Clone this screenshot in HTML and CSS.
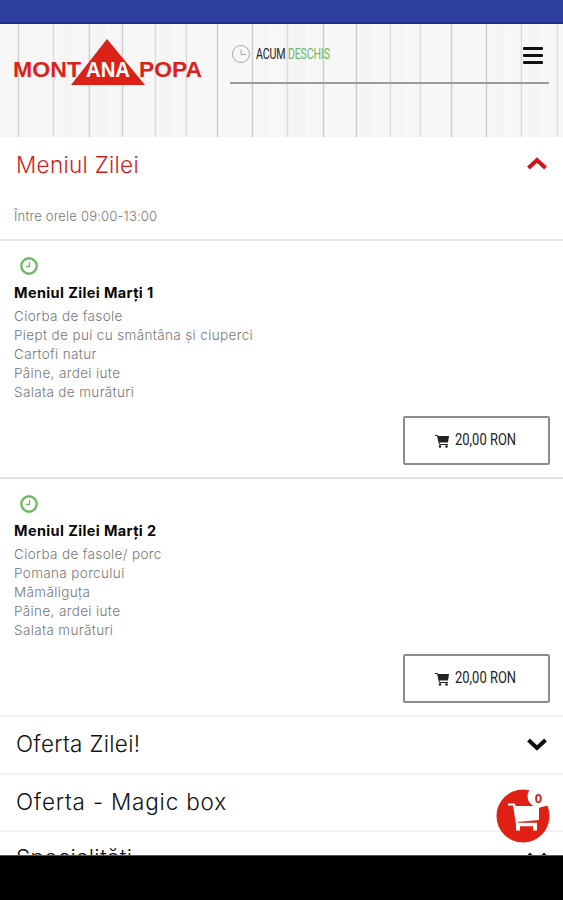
FILE: index.html
```html
<!DOCTYPE html>
<html lang="ro">
<head>
    <meta charset="UTF-8">
    <meta name="viewport" content="width=device-width, initial-scale=1.0">
    <title>Montana Popa</title>
    <link rel="stylesheet" href="styles.css">
</head>
<body>
    <div class="status-bar"></div>

    <header class="header">
        <svg class="planks" viewBox="0 0 563 113" preserveAspectRatio="none">
            <defs>
                <linearGradient id="grain" x1="0" x2="1">
                    <stop offset="0" stop-color="#f8f8f8"/>
                    <stop offset=".35" stop-color="#f4f4f4"/>
                    <stop offset=".6" stop-color="#f8f8f8"/>
                    <stop offset="1" stop-color="#f5f5f5"/>
                </linearGradient>
            </defs>
            <rect width="563" height="113" fill="#f7f7f7"/>
            <g fill="url(#grain)">
                <rect x="54" width="35" height="113"/>
                <rect x="89" width="34" height="113"/>
                <rect x="156" width="31" height="113"/>
                <rect x="253" width="35" height="113"/>
                <rect x="288" width="35" height="113"/>
                <rect x="357" width="33" height="113"/>
                <rect x="390" width="31" height="113"/>
                <rect x="487" width="35" height="113"/>
                <rect x="522" width="35" height="113"/>
            </g>
            <path d="M18.5 0V113M89.5 0V113M122.5 0V113M217.5 0V113M252.5 0V113M323.5 0V113M356.5 0V113M451.5 0V113M486.5 0V113" stroke="#cfcfcf" stroke-width="1.5"/>
            <path d="M53.5 0V113M155.5 0V113M186.5 0V113M287.5 0V113M390.5 0V113M420.5 0V113M521.5 0V113M557.5 0V113" stroke="#dcdcdc" stroke-width="1.5"/>
        </svg>

        <svg class="logo" width="190" height="48" viewBox="0 0 190 48">
            <path d="M93 0L131 46H57Z" fill="#dc2118"/>
            <text class="logo-text" x="-1" y="38" textLength="68" lengthAdjust="spacingAndGlyphs">MONT</text>
            <text class="logo-text logo-light" x="72" y="38" textLength="44" lengthAdjust="spacingAndGlyphs">ANA</text>
            <text class="logo-text" x="125" y="38" textLength="63" lengthAdjust="spacingAndGlyphs">POPA</text>
        </svg>

        <div class="header-info">
            <div class="schedule">
                <svg width="22" height="22" viewBox="0 0 22 22">
                    <circle cx="11" cy="11" r="8.5"/>
                    <path d="M11 6.5V11.5H16"/>
                </svg>
                <p>ACUM <span>DESCHIS</span></p>
            </div>
            <div class="hamburger">
                <span></span>
                <span></span>
                <span></span>
            </div>
        </div>
    </header>

    <main class="menu">
        <section>
            <div class="category active">
                <h2>Meniul Zilei</h2>
                <svg width="22" height="16" viewBox="0 0 22 16"><path d="M2.5 12L11 4L19.5 12"/></svg>
            </div>
            <p class="note">Între orele 09:00-13:00</p>

            <article class="item">
                <svg class="clock" width="18" height="18" viewBox="0 0 18 18">
                    <circle cx="9" cy="9" r="7.7"/>
                    <path d="M9.5 5V9.5H6"/>
                </svg>
                <h3>Meniul Zilei Marți 1</h3>
                <p>Ciorba de fasole<br>Piept de pui cu smântâna și ciuperci<br>Cartofi natur<br>Pâine, ardei iute<br>Salata de murături</p>
                <button class="price">
                    <svg width="14" height="14" viewBox="0 0 14 14">
                        <path d="M0 1.5H2.5L4.5 10.5H13" fill="none" stroke="#222"/>
                        <path d="M2.5 2H14L13 8.5H4Z"/>
                        <circle cx="5" cy="12.5" r="1.3"/>
                        <circle cx="11.5" cy="12.5" r="1.3"/>
                    </svg>
                    <span>20,00 RON</span>
                </button>
            </article>

            <article class="item">
                <svg class="clock" width="18" height="18" viewBox="0 0 18 18">
                    <circle cx="9" cy="9" r="7.7"/>
                    <path d="M9.5 5V9.5H6"/>
                </svg>
                <h3>Meniul Zilei Marți 2</h3>
                <p>Ciorba de fasole/ porc<br>Pomana porcului<br>Mămăliguța<br>Pâine, ardei iute<br>Salata murături</p>
                <button class="price">
                    <svg width="14" height="14" viewBox="0 0 14 14">
                        <path d="M0 1.5H2.5L4.5 10.5H13" fill="none" stroke="#222"/>
                        <path d="M2.5 2H14L13 8.5H4Z"/>
                        <circle cx="5" cy="12.5" r="1.3"/>
                        <circle cx="11.5" cy="12.5" r="1.3"/>
                    </svg>
                    <span>20,00 RON</span>
                </button>
            </article>
        </section>

        <div class="category">
            <h2>Oferta Zilei!</h2>
            <svg width="22" height="16" viewBox="0 0 22 16"><path d="M2.5 4L11 12L19.5 4"/></svg>
        </div>
        <div class="category">
            <h2 class="wide">Oferta - Magic box</h2>
        </div>
        <div class="category last">
            <h2>Specialități</h2>
            <svg width="22" height="16" viewBox="0 0 22 16"><path d="M2.5 4L11 12L19.5 4"/></svg>
        </div>
    </main>

    <div class="nav-bar"></div>

    <!-- floating cart -->
    <svg class="cart" width="54" height="54" viewBox="0 0 54 54">
        <circle cx="27" cy="27" r="26.5" fill="#e01f15"/>
        <path d="M34 0C30 6 31 12 36 16L42 19L54 16V0Z" fill="#fff"/>
        <path d="M12 15.5H18L21.5 38" fill="none" stroke="#fff" stroke-width="2.2"/>
        <path d="M18 17H43V31L20.5 33Z" fill="#fff"/>
        <path d="M20.5 35.5H41" stroke="#fff" stroke-width="3.5"/>
        <path d="M22 35V41.5M39 35V41.5" stroke="#fff" stroke-width="4"/>
        <text class="cart-count" x="42.5" y="13.5" text-anchor="middle">0</text>
    </svg>
</body>
</html>
```
FILE: styles.css
```css
* {
    margin: 0;
    padding: 0;
    box-sizing: border-box;
}

body {
    height: 900px;
    overflow: hidden;
    display: flex;
    flex-direction: column;
    background: #fff;
    color: #111;
    font-family: 'Inter', 'Open Sans', sans-serif;
}

.status-bar {
    flex: none;
    height: 24px;
    background: #2e409f;
    border-bottom: 2px solid #1f2b8b;
}

.header {
    position: relative;
    flex: none;
    display: flex;
    align-items: flex-start;
    justify-content: space-between;
    height: 113px;
    padding: 15px 14px 0;
}

.planks {
    position: absolute;
    top: 0;
    left: 0;
    width: 100%;
    height: 100%;
    z-index: -1;
}

.logo {
    overflow: visible;
}

.logo-text {
    font: bold 22.5px 'Liberation Sans', sans-serif;
    fill: #dc2118;
}

.logo-light {
    fill: #fff;
}

.header-info {
    display: flex;
    justify-content: space-between;
    width: 319px;
    height: 45px;
    border-bottom: 2px solid #9b9b9b;
}

.schedule {
    display: flex;
    height: 22px;
    margin-top: 4px;
}

.schedule svg {
    fill: none;
    stroke: #a9a9a9;
}

.schedule p {
    margin-left: 4px;
    width: 100px;
    font-family: 'Roboto', sans-serif;
    font-size: 14px;
    line-height: 22px;
    letter-spacing: -0.2px;
    white-space: nowrap;
    color: #222;
    transform: scaleX(0.76);
    transform-origin: left;
}

.schedule p span {
    color: #70b85b;
}

.hamburger {
    display: flex;
    flex-direction: column;
    gap: 4px;
    width: 20px;
    margin: 8px 6px 0 0;
}

.hamburger span {
    height: 3px;
    border-radius: 1px;
    background: #111;
}

.menu {
    flex: 1;
    min-height: 0;
    overflow: hidden;
}

.category {
    display: flex;
    align-items: center;
    justify-content: space-between;
    height: 57.5px;
    padding: 0 15px 2px 16px;
    border-top: 2px solid #f4f4f4;
}

.category h2 {
    font-size: 22.5px;
    font-weight: 350;
    letter-spacing: 0.3px;
}

.category h2.wide {
    letter-spacing: 0.8px;
}

.category.last {
    padding-bottom: 4px;
}

.category svg {
    fill: none;
    stroke: #111;
    stroke-width: 4;
}

.category.active {
    height: 54px;
    padding-bottom: 0;
    border-top: none;
    color: #cb1f1f;
}

.category.active svg {
    stroke: #cb1717;
}

.note {
    height: 48px;
    padding: 14px 14px 0;
    font-size: 13px;
    line-height: 22px;
    font-weight: 300;
    letter-spacing: 0.2px;
    color: #777;
}

.item {
    display: flex;
    flex-direction: column;
    align-items: flex-start;
    height: 238px;
    padding: 16px 13px 0 14px;
    border-top: 2px solid #e4e4e4;
}

.clock {
    margin-left: 6px;
    fill: none;
    stroke: #70b966;
    stroke-width: 2.4;
}

.clock path {
    stroke-width: 1.3;
}

.item h3 {
    margin-top: 8px;
    font-size: 14.5px;
    line-height: 20px;
    font-weight: 700;
    letter-spacing: 0.38px;
    color: #080808;
}

.item p {
    margin-top: 4px;
    font-size: 13.5px;
    line-height: 19px;
    font-weight: 300;
    letter-spacing: 0.36px;
    color: #777;
}

.price {
    display: flex;
    align-items: center;
    align-self: flex-end;
    width: 147px;
    height: 49px;
    margin-top: 14px;
    padding-left: 30px;
    border: 2px solid #8c8c8c;
    border-radius: 2px;
    background: #fff;
}

.price svg {
    flex: none;
    fill: #222;
}

.price span {
    margin: -2px 0 0 6px;
    font-family: 'Roboto', sans-serif;
    font-size: 16px;
    line-height: 22px;
    white-space: nowrap;
    color: #222;
    transform: scaleX(0.81);
    transform-origin: left;
}

.nav-bar {
    flex: none;
    height: 45px;
    background: #000;
    border-top: 1px solid #555;
}

.cart {
    position: absolute;
    right: 13px;
    top: 789px;
}

.cart-count {
    font: bold 13px 'Open Sans', sans-serif;
    fill: #cb2821;
}
```
